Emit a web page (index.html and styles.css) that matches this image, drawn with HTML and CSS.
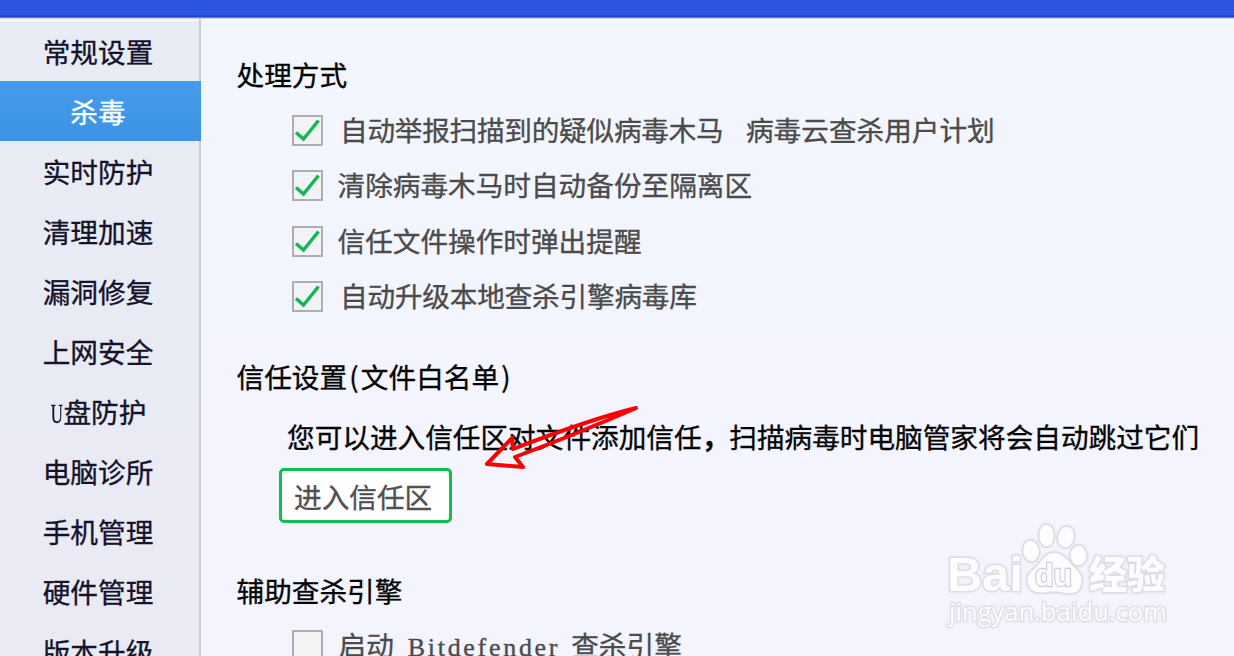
FILE: index.html
```html
<!DOCTYPE html>
<html lang="zh-CN">
<head>
<meta charset="utf-8">
<title>设置</title>
<link rel="stylesheet" href="styles.css">
</head>
<body>
<div class="titlebar"></div>
<div class="layout">
  <nav class="sidebar">
    <a class="item">常规设置</a>
    <a class="item active">杀毒</a>
    <a class="item">实时防护</a>
    <a class="item">清理加速</a>
    <a class="item">漏洞修复</a>
    <a class="item">上网安全</a>
    <a class="item"><span class="half">U</span>盘防护</a>
    <a class="item">电脑诊所</a>
    <a class="item">手机管理</a>
    <a class="item">硬件管理</a>
    <a class="item">版本升级</a>
  </nav>
  <main class="content">
    <section class="handling">
      <h2 class="heading">处理方式</h2>
      <ul class="options">
        <li class="option"><span class="box"><svg class="tick" viewBox="0 0 27 27"><path d="M2 15.500 L9.500 22 L24.500 3.500"/></svg></span><span class="label"><span class="lead">自动举报扫描到的疑似病毒木马</span>病毒云查杀用户计划</span></li>
        <li class="option near"><span class="box"><svg class="tick" viewBox="0 0 27 27"><path d="M2 15.500 L9.500 22 L24.500 3.500"/></svg></span><span class="label">清除病毒木马时自动备份至隔离区</span></li>
        <li class="option near"><span class="box"><svg class="tick" viewBox="0 0 27 27"><path d="M2 15.500 L9.500 22 L24.500 3.500"/></svg></span><span class="label">信任文件操作时弹出提醒</span></li>
        <li class="option"><span class="box"><svg class="tick" viewBox="0 0 27 27"><path d="M2 15.500 L9.500 22 L24.500 3.500"/></svg></span><span class="label tight">自动升级本地查杀引擎病毒库</span></li>
      </ul>
    </section>
    <section class="trust">
      <h2 class="heading">信任设置<span class="half">(</span>文件白名单<span class="half">)</span></h2>
      <p class="note">您可以进入信任区对文件添加信任<span class="comma">，</span>扫描病毒时电脑管家将会自动跳过它们</p>
      <button class="enter">进入信任区</button>
    </section>
    <section class="engine">
      <h2 class="heading">辅助查杀引擎</h2>
      <ul class="options">
        <li class="option near"><span class="box"></span><span class="label">启动<span class="latin">Bitdefender</span>查杀引擎</span></li>
      </ul>
    </section>
  </main>
</div>
<svg class="arrow" viewBox="0 0 170 80"><path d="M157 13 Q112 24 34 54 L33 43 L8 69 L44 72 L36 62 Q100 38 157 13 Z"/></svg>
<svg class="watermark" viewBox="0 0 240 120">
  <g class="mark">
    <text class="brand" x="4" y="71" textLength="76" lengthAdjust="spacingAndGlyphs">Bai</text>
    <ellipse cx="88" cy="31" rx="8.500" ry="11" transform="rotate(-8 88 31)"/>
    <ellipse cx="103.500" cy="15.500" rx="8" ry="11.500"/>
    <ellipse cx="123" cy="17" rx="8.500" ry="11" transform="rotate(12 123 17)"/>
    <ellipse cx="135.500" cy="35.500" rx="8.500" ry="10.500"/>
    <path d="M111 32 C121 32 126 42 133 48 C144 58 140 74 127 74 C119 74 116 72 111 72 C105 72 101 74 95 73 C82 71 81 57 89 50 C98 43 101 32 111 32 Z"/>
    <text class="du" x="92" y="66" textLength="37" lengthAdjust="spacingAndGlyphs">du</text>
    <text class="name" x="146" y="68" textLength="76" lengthAdjust="spacingAndGlyphs">经验</text>
    <text class="site" x="6" y="101" textLength="218" lengthAdjust="spacingAndGlyphs">jingyan.baidu.com</text>
  </g>
</svg>
</body>
</html>
```
FILE: styles.css
```css
* { box-sizing: border-box; }

body {
  margin: 0;
  width: 1234px;
  height: 656px;
  overflow: hidden;
  position: relative;
  background: linear-gradient(#f3f6fe, #f4f4fe);
  font: 27.65px/40px "Noto Sans CJK SC", sans-serif;
  -webkit-text-stroke: 0.35px currentColor;
  color: #050505;
}

.titlebar {
  height: 19px;
  background: linear-gradient(#2c55e2 0, #2c55e2 15px, #2342bd 16px, #2342bd 17px, #a4b3ed 18px, #f5f7fe 19px);
}

.layout { display: flex; height: 637px; overflow: hidden; }

.sidebar {
  flex: none;
  width: 201px;
  height: 664px;
  padding-top: 2px;
  background: linear-gradient(#f3f5fb 0, #f3f5fb 2px, #e8ecf4 3px, #eaeaf4);
  border-right: 2px solid #cbcdd6;
  color: #15132c;
}

.item {
  display: block;
  height: 60px;
  padding-right: 3px;
  line-height: 60px;
  text-align: center;
}

.item.active {
  width: 201px;
  margin-right: -2px;
  padding-right: 5px;
  background: linear-gradient(#479bea, #3b93e5);
  color: #fff;
}

.half { display: inline-block; width: 13.8px; text-align: center; }
.item .half { font-family: "Liberation Serif", serif; font-size: 27px; transform: scaleX(.62); text-indent: -3px; }

.content { flex: none; padding: 35px 0 0 35px; white-space: nowrap; }

.heading { margin: 0; font-size: inherit; font-weight: 400; height: 40px; padding-left: 0.5px; }

.options { list-style: none; margin: 0; padding: 9px 0 0 56px; }

.option {
  display: flex;
  align-items: center;
  height: 55.3px;
  color: #4b4b4b;
  gap: 17px;
}
.option.near { gap: 14.500px; }
.label { padding-bottom: 3px; }
.lead { margin-right: 22.500px; letter-spacing: -0.25px; }
.tight { letter-spacing: -0.2px; }

.box {
  flex: none;
  width: 31px;
  height: 31px;
  border: 2px solid #adadb2;
  background: #f1f3f4;
}

.tick {
  display: block;
  width: 27px;
  height: 27px;
  fill: none;
  stroke: #14b554;
  stroke-width: 3.4;
}

.handling { height: 302px; }
.trust { height: 214px; }

.note { margin: 20px 0 0 51px; height: 40px; }
.comma { font-weight: 700; }

.enter {
  display: block;
  width: 173px;
  height: 55px;
  margin: 12px 0 0 43px;
  padding: 0 0 0 12px;
  border: 3px solid #0dc14b;
  border-radius: 5px;
  background: #fff;
  font: inherit;
  line-height: 48px;
  text-align: left;
  color: #505050;
}

.engine .options { padding-top: 8px; }
.engine .label { padding: 0 0 0 1px; }

.latin {
  margin: 0 11px 0 14px;
  font-family: "Liberation Serif", serif;
  font-size: 26px;
  letter-spacing: 2.7px;
}

.arrow {
  position: absolute;
  left: 479px;
  top: 395px;
  width: 170px;
  height: 80px;
  fill: none;
  stroke: #f00;
  stroke-width: 4;
  stroke-linejoin: round;
}

.watermark {
  position: absolute;
  left: 943px;
  top: 520px;
  width: 240px;
  height: 120px;
  -webkit-text-stroke: 0;
}

.mark {
  fill: #fdfdff;
  stroke: #dcdce3;
  stroke-width: 1.5;
  filter: drop-shadow(0 0 1px #dcdce3);
}

.mark text { paint-order: stroke; stroke: #dcdce3; stroke-width: 2.5; }
.brand { font: 700 48px "Liberation Sans", sans-serif; }
.mark .du { font: 700 32px "Liberation Sans", sans-serif; stroke: #cfcfd8; }
.name { font: 900 38px "Noto Sans CJK SC", sans-serif; }
.mark .site { font: 400 26px "Open Sans", sans-serif; stroke-width: 2; }
```
